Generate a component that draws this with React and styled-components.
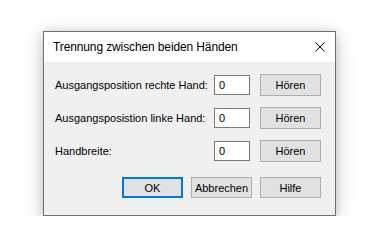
import React, { useState } from 'react'
import styled, { createGlobalStyle } from 'styled-components'

const GlobalStyle = createGlobalStyle`
  html, body {
    margin: 0;
    background: #ffffff;
  }
  body {
    font-family: "Liberation Sans", Arial, sans-serif;
    font-size: 11px;
    color: #000;
  }
`

const Page = styled.div`
  padding: 31px 0 0 43px;
`

const Window = styled.div`
  width: 293px;
  box-sizing: border-box;
  border: 1px solid #6f6f6f;
  background: #f0f0f0;
  box-shadow: 0 5px 18px rgba(0, 0, 0, 0.22), 0 0 8px rgba(0, 0, 0, 0.1);
`

const TitleBar = styled.div`
  height: 30px;
  background: #fff;
  display: flex;
  align-items: center;
  justify-content: space-between;
  padding: 0 10px 0 9px;
  >span{
    font-size: 12px;
    letter-spacing: -0.12px;
  }
`

const CloseButton = styled.button`
  border: 0;
  background: transparent;
  padding: 0;
  width: 10px;
  height: 10px;
  display: flex;
  cursor: pointer;
`

const Body = styled.div`
  padding: 12px 14px 17px 11px;
`

const Grid = styled.div`
  display: grid;
  grid-template-columns: 149px 36px 61px;
  grid-auto-rows: 22px;
  column-gap: 10px;
  row-gap: 11px;
  align-items: center;
`

const Label = styled.label`
  white-space: nowrap;
`

const Input = styled.input`
  box-sizing: border-box;
  width: 36px;
  height: 20px;
  border: 1px solid #7a7a7a;
  background: #fff;
  padding: 0 0 0 4px;
  font: inherit;
  outline: none;
`

const Button = styled.button`
  box-sizing: border-box;
  width: 61px;
  height: ${p => p.$h || 22}px;
  background: #e1e1e1;
  border: ${p => p.$default ? '2px solid #0078d7' : '1px solid #adadad'};
  font: inherit;
  color: #000;
  padding: 0;
  cursor: pointer;
`

const Footer = styled.div`
  display: flex;
  justify-content: flex-end;
  gap: 8px;
  margin-top: 15px;
`

const rows = [
  { key: 'right', label: 'Ausgangsposition rechte Hand:' },
  { key: 'left', label: 'Ausgangsposistion linke Hand:' },
  { key: 'width', label: 'Handbreite:' },
]

const App = () => {
  const [values, setValues] = useState({ right: '0', left: '0', width: '0' })

  const handleChange = e => {
    setValues(prev => ({ ...prev, [e.target.name]: e.target.value }))
  }

  return (
    <Page>
      <GlobalStyle />
      <Window>
        <TitleBar>
          <span>Trennung zwischen beiden Händen</span>
          <CloseButton aria-label="Schließen">
            <svg width="10" height="10" viewBox="0 0 10 10">
              <path d="M0.5 0.5L9.5 9.5M9.5 0.5L0.5 9.5" stroke="#000" strokeWidth="1" fill="none" />
            </svg>
          </CloseButton>
        </TitleBar>
        <Body>
          <Grid>
            {rows.map(r => (
              <React.Fragment key={r.key}>
                <Label htmlFor={r.key}>{r.label}</Label>
                <Input id={r.key} name={r.key} value={values[r.key]} onChange={handleChange} />
                <Button>Hören</Button>
              </React.Fragment>
            ))}
          </Grid>
          <Footer>
            <Button $default $h={21}>OK</Button>
            <Button $h={21}>Abbrechen</Button>
            <Button $h={21}>Hilfe</Button>
          </Footer>
        </Body>
      </Window>
    </Page>
  )
}

export default App
